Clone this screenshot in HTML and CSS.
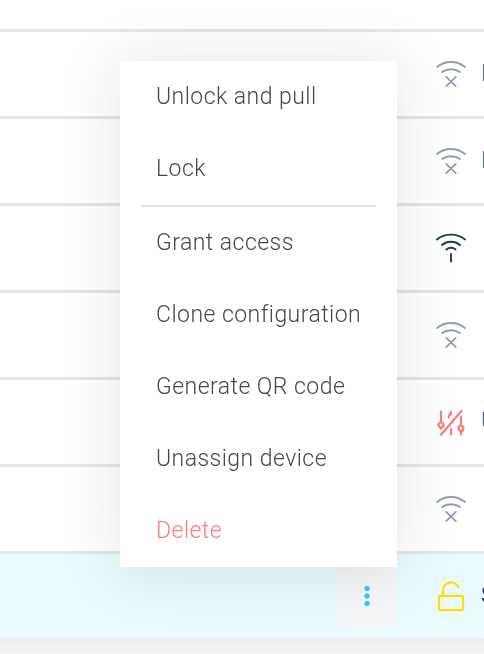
FILE: index.html
```
<!DOCTYPE html>
<html lang="en">
<head>
<meta charset="utf-8">
<title>Devices</title>
<link rel="stylesheet" href="styles.css">
</head>
<body>
<svg class="defs" aria-hidden="true">
  <symbol id="offline" viewBox="0 0 32 32">
    <path d="M2 9C10 2.300 22 2.300 30 9M7 14C12 10.300 20 10.300 25 14M11.200 18.800l9.600 9.400M20.800 18.800l-9.600 9.400"/>
  </symbol>
  <symbol id="online" viewBox="0 0 32 32">
    <path d="M2 7.500C10 1 22 1 30 7.500M7 13C12 8.700 20 8.700 25 13M11.500 17.500C14 15.200 18 15.200 20.500 17.500M16 22v7.500"/>
  </symbol>
  <symbol id="sliders" viewBox="0 0 32 32">
    <path d="M6 5.500v10.800M6 22v1M16 5.500v2.500M16.200 8.300a2.400 2.400 0 0 0-2.300 3.200M16 23v5.500M26 11v8.500M26 25v3.500M26.500 5L6 28.800"/>
    <circle cx="6" cy="19" r="2.500"/><circle cx="26" cy="22.300" r="2.500"/>
  </symbol>
  <symbol id="unlocked" viewBox="0 0 32 32">
    <rect x="4" y="15.800" width="24" height="14.400" rx="1.200"/>
    <path d="M8 15.500V10.500a8 8 0 0 1 15.300-3.300"/>
  </symbol>
</svg>
<main class="table">
  <div class="row head"></div>
  <div class="row"><svg class="icon"><use href="#offline"/></svg><span class="name">L</span></div>
  <div class="row"><svg class="icon"><use href="#offline"/></svg><span class="name">L</span></div>
  <div class="row"><svg class="icon on"><use href="#online"/></svg></div>
  <div class="row"><svg class="icon"><use href="#offline"/></svg></div>
  <div class="row"><svg class="icon alert"><use href="#sliders"/></svg><span class="name">U</span></div>
  <div class="row"><svg class="icon"><use href="#offline"/></svg></div>
  <div class="row selected">
    <button class="more" aria-label="More"><i></i><i></i><i></i></button>
    <svg class="icon open"><use href="#unlocked"/></svg><span class="name dark">S</span>
  </div>
</main>
<nav class="menu">
  <a class="item">Unlock and pull</a>
  <a class="item">Lock</a>
  <hr class="divider">
  <a class="item">Grant access</a>
  <a class="item">Clone configuration</a>
  <a class="item">Generate QR code</a>
  <a class="item">Unassign device</a>
  <a class="item delete">Delete</a>
</nav>
</body>
</html>
```
FILE: styles.css
```
* { box-sizing: border-box; }
body {
  margin: 0;
  height: 654px;
  overflow: hidden;
  position: relative;
  background: linear-gradient(#ededed, #f3f3f3) 0 100% / 100% 16px no-repeat #fff;
  font-family: Roboto, sans-serif;
}
.defs { position: absolute; width: 0; height: 0; }
.table { background: #fff; }
.row {
  height: 87px;
  border-bottom: 3px solid #e2e6eb;
  display: flex;
  align-items: center;
  justify-content: flex-end;
  overflow: hidden;
}
.row.head { height: 32px; }
.row.selected { height: 84px; border: 0; background: #e9faff; }
.icon {
  width: 32px;
  height: 32px;
  flex: none;
  margin-right: 17px;
  fill: none;
  stroke: #929db5;
  stroke-width: 1.8;
  stroke-linecap: round;
}
.icon.on { stroke: #243763; stroke-width: 1.9; }
.icon.alert { stroke: #ff7b7b; stroke-width: 2.2; }
.icon.open { stroke: #ffdf00; stroke-width: 2.2; }
.name {
  width: 3px;
  margin-left: -3px;
  font-size: 23px;
  font-weight: 300;
  line-height: 30px;
  color: #56617c;
  will-change: transform;
}
.name.dark { color: #243763; font-weight: 400; }
.more {
  width: 60px;
  height: 60px;
  margin: 0 38px 0 0;
  padding: 0;
  border: 0;
  border-radius: 5px;
  background: #f4f5f7;
  display: flex;
  flex-direction: column;
  align-items: center;
  justify-content: center;
}
.more i {
  width: 7.500px;
  height: 7.500px;
  background: radial-gradient(circle, #33c8ff 2.300px, transparent 3px);
}
.menu {
  position: absolute;
  left: 120px;
  top: 61px;
  width: 277px;
  background: #fff;
  box-shadow: 0 3px 60px rgba(0, 0, 0, .11);
}
.item {
  display: block;
  height: 72px;
  padding-left: 36px;
  line-height: 72px;
  font-size: 23px;
  font-weight: 300;
  letter-spacing: .46px;
  color: #484848;
  will-change: transform;
  white-space: nowrap;
}
.item.delete { color: #ff7b7b; }
.divider { height: 2px; margin: 0 21px; border: 0; background: #e1e5ef; }
```
